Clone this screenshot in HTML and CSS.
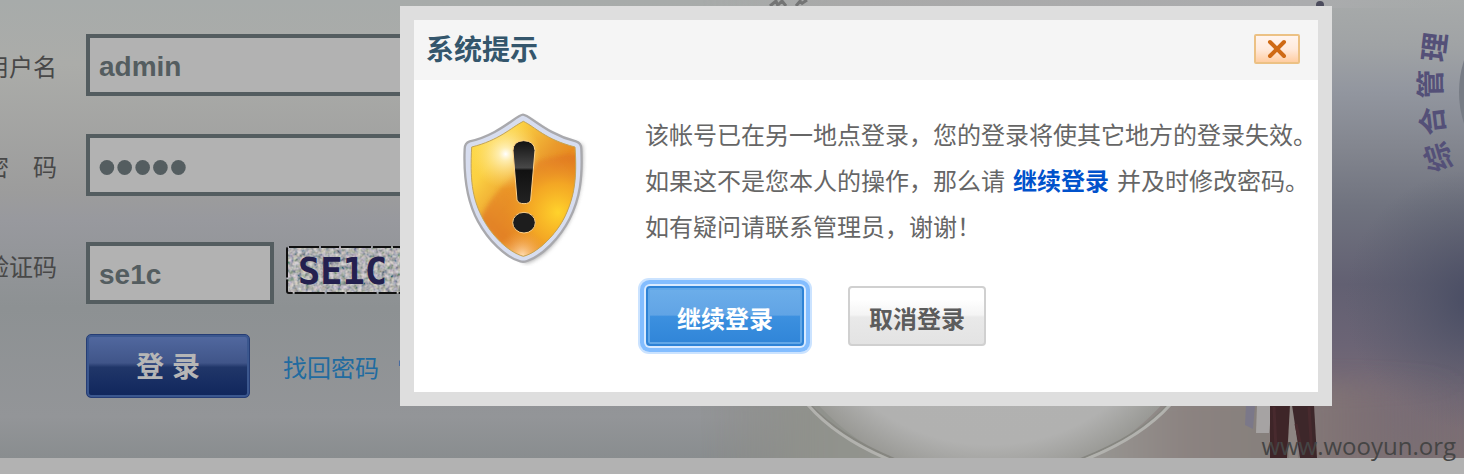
FILE: index.html
```html
<!DOCTYPE html>
<html lang="zh-CN">
<head>
<meta charset="utf-8">
<title>系统提示</title>
<link rel="stylesheet" href="styles.css">
</head>
<body>
<main class="page">
  <svg class="scene" viewBox="700 0 764 458" preserveAspectRatio="xMaxYMin slice" aria-hidden="true">
    <defs>
      <linearGradient id="sky" x1="0" y1="0" x2="0" y2="1">
        <stop offset="0" stop-color="#a7aaaa"/>
        <stop offset=".1" stop-color="#a0a3a5"/>
        <stop offset=".2" stop-color="#92969f"/>
        <stop offset=".32" stop-color="#83868f"/>
        <stop offset=".45" stop-color="#70737f"/>
        <stop offset=".62" stop-color="#626072"/>
        <stop offset=".75" stop-color="#6b6475"/>
        <stop offset=".88" stop-color="#7a6c76"/>
        <stop offset="1" stop-color="#7d7072"/>
      </linearGradient>
      <radialGradient id="dusk" gradientUnits="userSpaceOnUse" cx="1475" cy="300" r="130">
        <stop offset="0" stop-color="#484c63"/>
        <stop offset="1" stop-color="#565b6b" stop-opacity="0"/>
      </radialGradient>
      <linearGradient id="fadeIn" x1="0" y1="0" x2="1" y2="0">
        <stop offset="0" stop-color="#fff" stop-opacity="0"/>
        <stop offset=".7" stop-color="#fff" stop-opacity="1"/>
      </linearGradient>
      <mask id="sceneMask"><rect x="700" width="764" height="458" fill="url(#fadeIn)"/></mask>
      <linearGradient id="floor" x1="0" y1="0" x2="1" y2="0">
        <stop offset="0" stop-color="#90928c" stop-opacity="0"/>
        <stop offset=".15" stop-color="#90928c"/>
        <stop offset=".5" stop-color="#999894"/>
        <stop offset=".64" stop-color="#8b8280"/>
        <stop offset=".75" stop-color="#86807c"/>
        <stop offset=".84" stop-color="#817374" stop-opacity=".8"/>
        <stop offset="1" stop-color="#6f6874" stop-opacity="0"/>
      </linearGradient>
      <radialGradient id="plate">
        <stop offset="0" stop-color="#b2b2b2"/>
        <stop offset=".84" stop-color="#b1b1b0"/>
        <stop offset="1" stop-color="#999995"/>
      </radialGradient>
      <linearGradient id="top" x1="0" y1="0" x2="1" y2="0">
        <stop offset="0" stop-color="#a9aaa9" stop-opacity="0"/>
        <stop offset=".2" stop-color="#a9a9a9"/>
        <stop offset=".8" stop-color="#abacae"/>
        <stop offset="1" stop-color="#a7aaaa" stop-opacity="0"/>
      </linearGradient>
      <filter id="haze" x="-10%" y="-50%" width="120%" height="200%"><feGaussianBlur stdDeviation="12"/></filter>
    </defs>
    <rect x="700" width="764" height="458" fill="url(#sky)" mask="url(#sceneMask)"/>
    <rect x="1320" width="144" height="458" fill="url(#dusk)"/>
    <rect x="700" y="0" width="764" height="8" fill="url(#top)"/>
    <rect x="700" y="384" width="764" height="110" fill="url(#floor)" filter="url(#haze)"/>
    <ellipse cx="990" cy="260" rx="228" ry="220" fill="url(#plate)"/>
    <path d="M810 405Q842 438 897 460M1168 405Q1136 438 1078 460" fill="none" stroke="#868680" stroke-width="2"/>
    <path d="M808 405Q837 438 890 460M1170 405Q1140 438 1084 460" fill="none" stroke="#b2b2ae" stroke-width="3"/>
    <path d="M770 6l6-5 2 5M778 5l4-4 4 5M796 6l5-6M801 4l6-4" stroke="#747575" stroke-width="3" fill="none"/>
    <circle cx="1320" cy="5" r="4" fill="#4c4c5d"/>
    <path d="M1246 405h9l-2 24-8-4z" fill="#7b7889"/>
    <path d="M1257 405h15l-3 28h-13z" fill="#a6a3a3"/>
    <path d="M1288 405h6l4 53h-9z" fill="#8d8582"/>
    <path d="M1270 405h20l-3 53h-17z" fill="#3e2528"/>
    <path d="M1292 405h22l3 53h-17z" fill="#3d272a"/>
    <path d="M1274 407l2 43M1309 407l3 50M1296 424l6 28" stroke="#482a2e" stroke-width="3"/>
    <ellipse cx="1520" cy="92" rx="61" ry="80" fill="#777c85"/>
    <g class="scene-text" fill="#545078">
      <text transform="translate(1434 47) rotate(-83)" dy="11">理</text>
      <text transform="translate(1430 84) rotate(-91)" dy="11">管</text>
      <text transform="translate(1432 121) rotate(-97)" dy="11">合</text>
      <text transform="translate(1438 157) rotate(-107)" dy="11">综</text>
    </g>
  </svg>

  <form class="login">
    <div class="row">
      <label for="user">用户名</label>
      <input class="field" id="user" type="text" value="admin">
    </div>
    <div class="row row-password">
      <label for="pass">密　码</label>
      <input class="field field-password" id="pass" type="password" value="admin">
    </div>
    <div class="row row-code">
      <label for="code">验证码</label>
      <input class="field field-code" id="code" type="text" value="se1c">
      <svg class="captcha" width="130" height="48" viewBox="0 0 130 48" role="img" aria-label="验证码图片">
        <defs>
          <filter id="noise" x="0" y="0" width="100%" height="100%">
            <feTurbulence type="fractalNoise" baseFrequency=".25" numOctaves="2" seed="4"/>
            <feColorMatrix values="1.6 0 0 0 -.26  1.3 .3 0 0 -.26  1.1 0 .5 0 -.26  0 0 0 0 1"/>
          </filter>
        </defs>
        <rect width="130" height="48" rx="3" fill="#929397"/>
        <rect x="1" y="1" width="128" height="46" filter="url(#noise)" opacity=".65"/>
        <rect x="1" y="1" width="128" height="46" rx="2" fill="none" stroke="#111" stroke-width="2" stroke-dasharray="30 2 18 2"/>
        <text class="captcha-text" x="12" y="38">SE1C</text>
      </svg>
    </div>
    <div class="actions">
      <button class="login-button" type="button">登 录</button>
      <a href="#">找回密码</a>
      <a href="#">常见问题</a>
    </div>
  </form>
</main>
<footer class="footer"><span class="watermark">www.wooyun.org</span></footer>

<div class="overlay">
  <section class="dialog" role="dialog" aria-labelledby="title">
    <header class="dialog-head">
      <h1 id="title">系统提示</h1>
      <button class="close" type="button" aria-label="关闭">
        <svg width="20" height="20" viewBox="0 0 20 20"><path d="M3 3L17 17M17 3L3 17" fill="none" stroke="#cf6a15" stroke-width="4" stroke-linecap="round"/></svg>
      </button>
    </header>
    <div class="dialog-body">
      <svg class="shield" width="124" height="154" viewBox="40 34 372 462" aria-hidden="true">
        <defs>
          <linearGradient id="gold" x1="0" y1="0" x2="1" y2="1">
            <stop offset="0" stop-color="#ffe04a"/>
            <stop offset=".26" stop-color="#fbd042"/>
            <stop offset=".49" stop-color="#ea9a2c"/>
            <stop offset=".58" stop-color="#e88d22"/>
            <stop offset=".78" stop-color="#fdcd2c"/>
            <stop offset="1" stop-color="#e88a25"/>
          </linearGradient>
          <linearGradient id="swoosh" x1="1" y1="0" x2="0" y2="1">
            <stop offset="0" stop-color="#de7223"/>
            <stop offset=".45" stop-color="#ec9928"/>
            <stop offset="1" stop-color="#da6e29"/>
          </linearGradient>
          <radialGradient id="lower" gradientUnits="userSpaceOnUse" cx="325" cy="335" r="175">
            <stop offset="0" stop-color="#ffd32c"/>
            <stop offset=".5" stop-color="#f6ad24" stop-opacity=".8"/>
            <stop offset="1" stop-color="#e48324" stop-opacity="0"/>
          </radialGradient>
          <radialGradient id="shine" gradientUnits="userSpaceOnUse" cx="168" cy="160" r="105">
            <stop offset="0" stop-color="#fff"/>
            <stop offset=".2" stop-color="#fff3c2" stop-opacity=".85"/>
            <stop offset="1" stop-color="#ffe070" stop-opacity="0"/>
          </radialGradient>
          <radialGradient id="tip" gradientUnits="userSpaceOnUse" cx="218" cy="463" r="75">
            <stop offset="0" stop-color="#ffd9ab"/>
            <stop offset="1" stop-color="#f5a443" stop-opacity="0"/>
          </radialGradient>
          <linearGradient id="ink" x1="0" y1="0" x2="0" y2="1">
            <stop offset="0" stop-color="#111"/>
            <stop offset=".43" stop-color="#484848"/>
            <stop offset=".47" stop-color="#111"/>
            <stop offset="1" stop-color="#222"/>
          </linearGradient>
          <filter id="soft" x="-20%" y="-20%" width="140%" height="140%"><feGaussianBlur stdDeviation="7"/></filter>
          <clipPath id="face"><path d="M221 62C257 79 286 116 376 139C383 235 373 289 347 345C322 398 266 456 221 467C177 455 124 404 96 347C67 289 61 235 66 139C148 119 184 81 221 62Z"/></clipPath>
        </defs>
        <path d="M230 56C275 76 295 112 398 132Q407 270 354 369Q300 465 230 488C160 448 65 340 55 145Z" fill="#777" opacity=".65" filter="url(#soft)"/>
        <path d="M220 42C202 42 148 103 60 122Q45 127 45 145C41 242 55 307 85 362C116 419 167 470 212 482Q221 485 232 481C278 466 331 411 360 354C391 293 399 232 395 145Q395 127 379 122C291 101 239 42 220 42Z" fill="#d7ddef" stroke="#a9a9ad" stroke-width="7"/>
        <g clip-path="url(#face)">
          <rect x="55" y="50" width="335" height="425" fill="url(#gold)"/>
          <path d="M390 158C275 163 196 211 143 275Q108 315 89 363L220 480 390 380Z" fill="url(#swoosh)" opacity=".85" filter="url(#soft)"/>
          <rect x="55" y="50" width="335" height="425" fill="url(#lower)"/>
          <rect x="55" y="50" width="335" height="425" fill="url(#shine)"/>
          <rect x="55" y="50" width="335" height="425" fill="url(#tip)"/>
        </g>
        <path d="M221 62C257 79 286 116 376 139C383 235 373 289 347 345C322 398 266 456 221 467C177 455 124 404 96 347C67 289 61 235 66 139C148 119 184 81 221 62Z" fill="none" stroke="#c4a456" stroke-width="3"/>
        <path d="M190 150Q190 121 222 120Q254 121 256 149L243 298Q240 309 223 309Q206 309 202 298Z" fill="url(#ink)" stroke="#ffd28a" stroke-width="3"/>
        <ellipse cx="223" cy="366" rx="34" ry="31" fill="#1d1d1d" stroke="#ffd28a" stroke-width="3"/>
      </svg>
      <div class="message">
        <p>该帐号已在另一地点登录，您的登录将使其它地方的登录失效。</p>
        <p>如果这不是您本人的操作，那么请<a href="#">继续登录</a>并及时修改密码。</p>
        <p>如有疑问请联系管理员，谢谢！</p>
        <div class="buttons">
          <button class="button button-primary" type="button">继续登录</button>
          <button class="button" type="button">取消登录</button>
        </div>
      </div>
    </div>
  </section>
</div>
</body>
</html>
```
FILE: styles.css
```css
* {
  box-sizing: border-box;
}

body {
  margin: 0;
  min-height: 100vh;
  display: flex;
  flex-direction: column;
  position: relative;
  overflow: hidden;
  background: #b2b2b2;
  font-family: "Liberation Sans", "Noto Sans CJK SC", sans-serif;
  font-size: 24px;
  color: #666;
}

button,
input {
  font: inherit;
}

a {
  text-decoration: none;
}

.page {
  position: relative;
  padding: 34px 0 60px;
  background: linear-gradient(#a7abaa 0%, #abaca9 14%, #9c9c9c 42%, #98999e 48%, #8d9193 67%, #939598 91%, #898d8f 100%);
}

.scene {
  position: absolute;
  top: 0;
  right: 0;
  width: 764px;
  height: 100%;
}

.scene-text {
  font-size: 29px;
  font-weight: 700;
  text-anchor: middle;
}

.login {
  position: relative;
  display: flex;
  flex-direction: column;
  width: 620px;
}

.row {
  display: flex;
  align-items: center;
  height: 62px;
}

.row-password {
  margin-top: 38px;
}

.row-code {
  margin-top: 46px;
}

.row label {
  display: flex;
  flex: none;
  justify-content: flex-end;
  width: 57px;
  margin-right: 29px;
  white-space: nowrap;
  color: #484848;
}

.row-code label {
  padding-bottom: 16px;
}

.field {
  flex: 1;
  min-width: 0;
  height: 62px;
  padding: 4px 9px 0;
  border: 4px solid #545d60;
  border-radius: 0;
  background: #b2b2b2;
  color: #545d60;
  font-size: 28px;
  font-weight: 700;
  outline: 0;
}

.field-password {
  padding-left: 8px;
  font-size: 51px;
}

.field-code {
  flex: none;
  width: 188px;
}

.captcha {
  margin: 0 0 6px 12px;
}

.captcha-text {
  font-family: "DejaVu Sans Mono", monospace;
  font-size: 37px;
  font-weight: 700;
  fill: #24204f;
}

.actions {
  display: flex;
  align-items: center;
  margin: 30px 0 0 86px;
}

.actions a {
  margin-right: 18px;
  color: #216ba0;
}

.login-button {
  width: 164px;
  height: 64px;
  margin-right: 33px;
  padding: 0 0 2px;
  border: 1px solid #263d75;
  border-radius: 5px;
  background: linear-gradient(#5269a0, #405589 45%, #203669 52%, #10265c);
  box-shadow: inset 0 0 0 2px #3b578e;
  color: #b6b6b6;
  font-size: 28px;
  font-weight: 700;
}

.footer {
  position: relative;
  flex: 1;
}

.watermark {
  position: absolute;
  right: 8px;
  bottom: 12px;
  font-family: "Open Sans", sans-serif;
  font-size: 24px;
  color: #454545;
}

.overlay {
  position: absolute;
  inset: 0;
  padding: 6px 132px 0 400px;
}

.dialog {
  border: 14px solid #dedede;
  background: #fff;
}

.dialog-head {
  display: flex;
  align-items: center;
  justify-content: space-between;
  height: 60px;
  padding: 0 18px 2px 12px;
  background: #f5f5f5;
}

.dialog-head h1 {
  margin: 0;
  padding-top: 4px;
  font-size: 28px;
  line-height: 40px;
  color: #34566c;
}

.close {
  display: grid;
  place-items: center;
  width: 46px;
  height: 30px;
  padding: 0;
  border: 2px solid #ecc184;
  border-radius: 2px;
  background: linear-gradient(#fff4ee, #ffeadc 50%, #ffcda2);
}

.dialog-body {
  display: flex;
  align-items: flex-start;
  padding: 32px 0 46px 49px;
}

.shield {
  flex: none;
  margin-right: 58px;
}

.message {
  padding-top: 1px;
}

.message p {
  margin: 0;
  line-height: 46px;
  white-space: nowrap;
}

.message a {
  margin: 0 8px;
  color: #0052cc;
  font-weight: 700;
}

.buttons {
  display: flex;
  gap: 44px;
  margin-top: 35px;
  padding-left: 1px;
}

.button {
  width: 138px;
  height: 60px;
  padding: 2px 0 0;
  border: 2px solid #d0d0d0;
  border-radius: 4px;
  background: linear-gradient(#fff 20%, #f4f4f4 48%, #e9e9e9 52%, #e3e3e3);
  color: #5c5c5c;
  font-weight: 700;
}

.button-primary {
  width: 158px;
  border-color: #2d82d6;
  background: linear-gradient(#6caeea, #61a4e5 48%, #3c90df 51%, #3085d8);
  box-shadow: inset 0 0 0 2px #62a7e7, 0 0 0 2px #d9eaff, 0 0 0 6px #83bdff, 0 0 0 8px #cbe3ff;
  color: #fff;
}
```
